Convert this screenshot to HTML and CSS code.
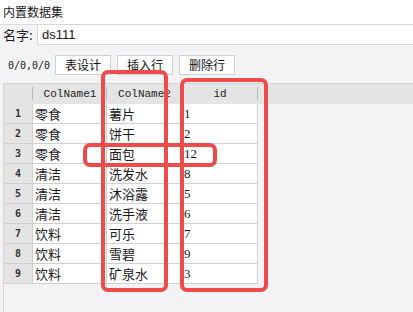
FILE: index.html
```html
<!DOCTYPE html>
<html>

<head>
    <title>内置数据集</title>
    <link rel="stylesheet" href="styles.css">
</head>

<body>
    <div class="title">内置数据集</div>
    <div class="name-row">
        <span class="name-label">名字:</span>
        <div class="name-input">ds111</div>
    </div>
    <div class="toolbar">
        <span class="pos">0/0,0/0</span>
        <button class="btn" type="button">表设计</button>
        <button class="btn" type="button">插入行</button>
        <button class="btn" type="button">删除行</button>
    </div>

    <div class="grid">
        <div class="grid-head">
            <div class="hcell num"></div>
            <div class="hcell">ColName1</div>
            <div class="hcell">ColName2</div>
            <div class="hcell">id</div>
        </div>
        <div class="grid-body">
            <div class="row"><div class="cell num">1</div><div class="cell">零食</div><div class="cell">薯片</div><div class="cell digit">1</div></div>
            <div class="row"><div class="cell num">2</div><div class="cell">零食</div><div class="cell">饼干</div><div class="cell digit">2</div></div>
            <div class="row"><div class="cell num">3</div><div class="cell">零食</div><div class="cell">面包</div><div class="cell digit">12</div></div>
            <div class="row"><div class="cell num">4</div><div class="cell">清洁</div><div class="cell">洗发水</div><div class="cell digit">8</div></div>
            <div class="row"><div class="cell num">5</div><div class="cell">清洁</div><div class="cell">沐浴露</div><div class="cell digit">5</div></div>
            <div class="row"><div class="cell num">6</div><div class="cell">清洁</div><div class="cell">洗手液</div><div class="cell digit">6</div></div>
            <div class="row"><div class="cell num">7</div><div class="cell">饮料</div><div class="cell">可乐</div><div class="cell digit">7</div></div>
            <div class="row"><div class="cell num">8</div><div class="cell">饮料</div><div class="cell">雪碧</div><div class="cell digit">9</div></div>
            <div class="row"><div class="cell num">9</div><div class="cell">饮料</div><div class="cell">矿泉水</div><div class="cell digit">3</div></div>
        </div>
    </div>

    <!-- red marks drawn over the grid -->
    <div class="mark mark-col2"></div>
    <div class="mark mark-id"></div>
    <div class="mark mark-row"></div>
</body>

</html>
```

FILE: styles.css
```css
/* General Styles */
html {
    height: 100%;
}

* {
    box-sizing: border-box;
}

body {
    margin: 0;
    height: 100%;
    background-color: #f3f3f6;
    color: #1a1a1a;
    font-family: "Noto Sans CJK SC", "Liberation Sans", sans-serif;
    font-size: 13px;
    display: flex;
    flex-direction: column;
    overflow: hidden;
    position: relative;
}

/* Header */
.title {
    height: 25px;
    line-height: 24px;
    padding-left: 3px;
    background: #fff;
    border-bottom: 1px solid #dcdcdc;
    font-size: 12px;
}

.name-row {
    display: flex;
    align-items: stretch;
    height: 21px;
    margin-top: -1px;
}

.name-label {
    width: 37px;
    padding-left: 3px;
    line-height: 21px;
}

.name-input {
    flex: 1;
    background: #fff;
    border: 1px solid #d6d6d6;
    border-right: 0;
    padding-left: 4px;
    line-height: 19px;
    font-family: "Liberation Sans", sans-serif;
    font-size: 13px;
}

/* Toolbar */
.toolbar {
    display: flex;
    align-items: center;
    gap: 6px;
    padding-left: 8px;
    margin-top: 10px;
    height: 20px;
}

.pos {
    font-family: "DejaVu Sans Mono", monospace;
    font-size: 10px;
    width: 41px;
    white-space: nowrap;
}

.btn {
    width: 56px;
    height: 20px;
    padding: 0;
    background: #fff;
    border: 1px solid #d0d0d0;
    font-family: "Noto Sans CJK SC", sans-serif;
    font-size: 12px;
    color: #111;
    line-height: 18px;
}

/* Grid */
.grid {
    flex: 1;
    margin-top: 8px;
    margin-left: 3px;
    border-left: 1px solid #d4d4d4;
    border-top: 1px solid #d4d4d4;
}

.grid-head {
    display: flex;
    height: 20px;
    background: #e4e4e4;
}

.hcell {
    position: relative;
    width: 74px;
    text-align: center;
    line-height: 20px;
    font-family: "Liberation Mono", monospace;
    font-size: 11px;
    color: #222;
    white-space: nowrap;
    overflow: hidden;
}

.hcell::after {
    content: "";
    position: absolute;
    right: 0;
    top: 3px;
    bottom: 4px;
    width: 1px;
    background: #b8b8b8;
    box-shadow: 1px 0 0 #f6f6f6;
}

.hcell:nth-child(3) {
    width: 75px;
}

.hcell:nth-child(4) {
    width: 76px;
}

.hcell.num {
    width: 29px;
}

.grid-body {
    width: 255px;
}

.row {
    display: grid;
    grid-template-columns: 29px 74px 75px 76px;
    height: 20px;
}

.cell {
    background: #fff;
    border-right: 1px solid #d0d0d0;
    border-bottom: 1px solid #d0d0d0;
    padding-left: 2px;
    line-height: 19px;
    white-space: nowrap;
}

.cell.num {
    background: #e4e4e4;
    text-align: center;
    padding-left: 0;
    font-family: "DejaVu Sans Mono", monospace;
    font-weight: bold;
    font-size: 10px;
    color: #333;
}

.cell.digit {
    font-family: "Liberation Serif", serif;
    font-size: 13px;
}

/* Red marks */
.mark {
    position: absolute;
    border: 4px solid #ef4b4b;
    border-radius: 7px;
}

.mark-col2 {
    left: 101px;
    top: 70px;
    width: 67px;
    height: 222px;
}

.mark-id {
    left: 180px;
    top: 78px;
    width: 88px;
    height: 214px;
}

.mark-row {
    left: 83px;
    top: 143px;
    width: 134px;
    height: 24px;
}
```
